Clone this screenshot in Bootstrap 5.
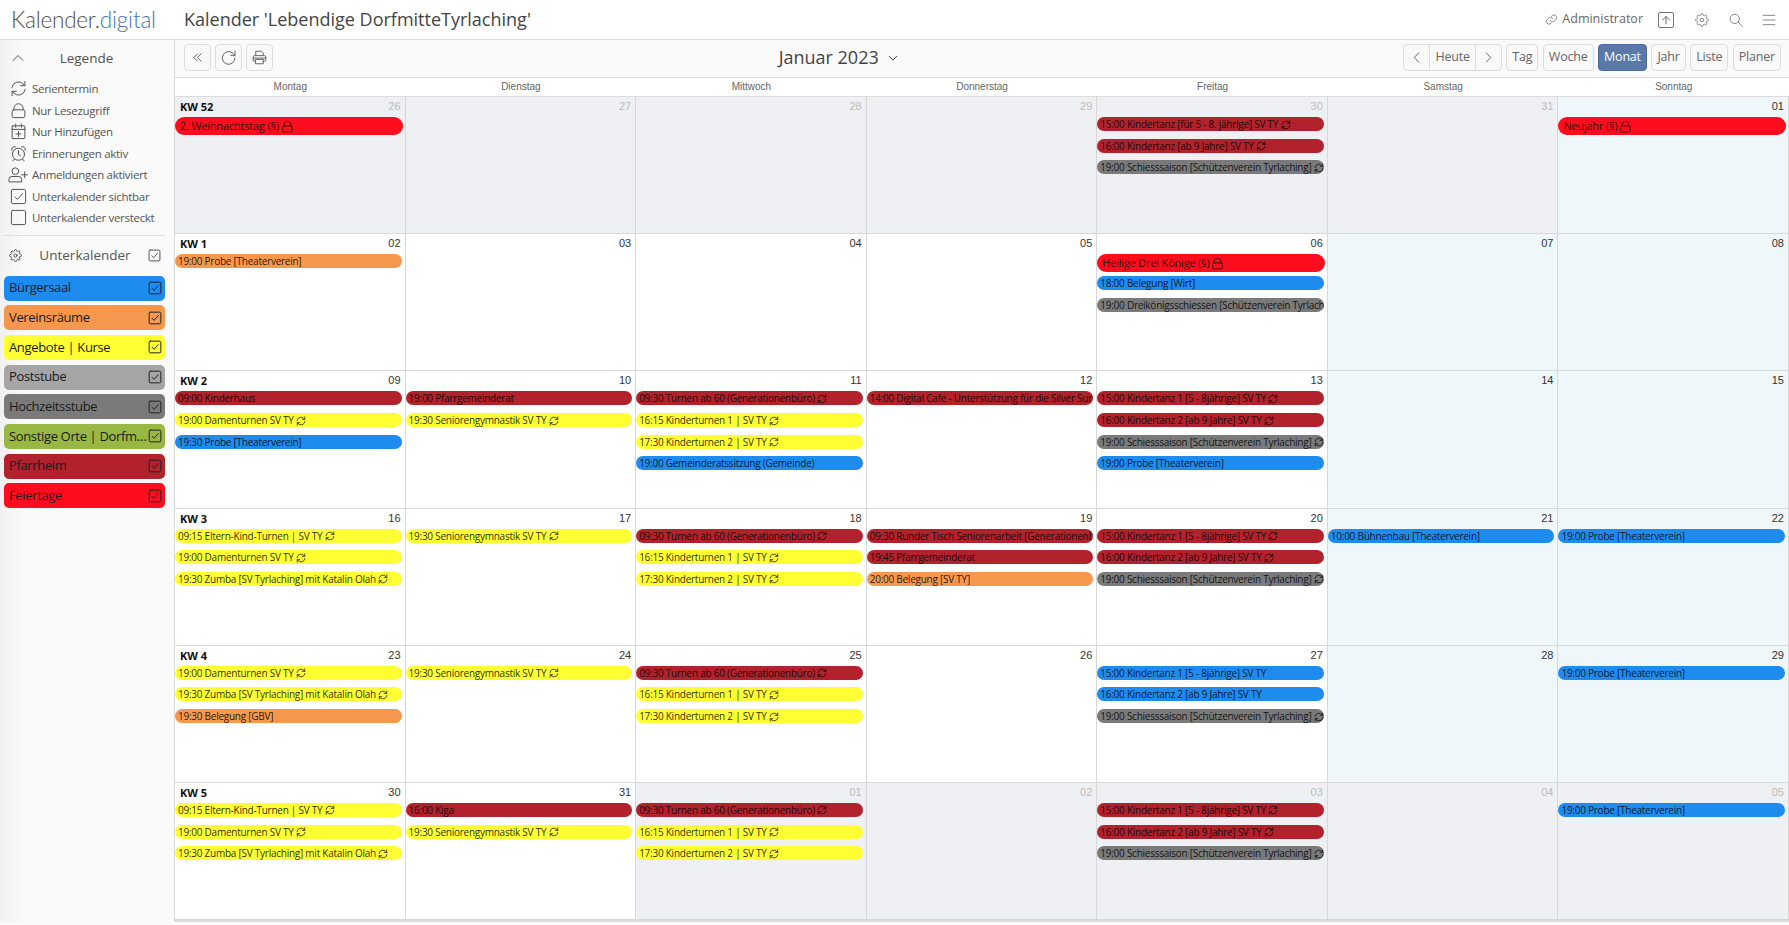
<!DOCTYPE html>
<html lang="de">
<head>
    <meta charset="UTF-8">
    <meta name="viewport" content="width=device-width, initial-scale=1.0">
    <title>Kalender 'Lebendige DorfmitteTyrlaching'</title>
    <link rel="stylesheet" href="https://cdn.jsdelivr.net/npm/bootstrap@5.3.0/dist/css/bootstrap.min.css">
    <script src="https://cdn.jsdelivr.net/npm/bootstrap@5.3.0/dist/js/bootstrap.bundle.min.js"></script>
    <style>
        html, body { height: 100%; }
        body { overflow: hidden; background: #fafafa; font-family: "Open Sans", sans-serif; color: #555; }
        svg.ic { fill: none; stroke: currentColor; stroke-width: 1px; stroke-linecap: round; stroke-linejoin: round; flex: none; }
        symbol * { vector-effect: non-scaling-stroke; }

        .top-bar { height: 40px; background: #fff; border-bottom: 1px solid #ddd; padding-left: 11px; }
        .logo { width: 173px; font-family: Lato, sans-serif; font-weight: 300; font-size: 22.5px; color: #4f4f4f; letter-spacing: -.2px; }
        .logo span { color: #3f73b0; }
        .page-title { font-size: 18px; color: #444; }
        .top-tools { color: #888; font-size: 12.5px; }
        .admin-name { color: #666; margin-right: 15px; }
        .up-box { width: 16px; height: 16px; margin-right: 21px; border: 1px solid #777; border-radius: 2px; color: #666; }
        .top-tools .tool-ic { margin-right: 19.5px; }
        .top-tools .tool-ic:last-child { margin-right: 13px; }

        .side-bar { width: 175px; padding: 6px 9px 0 4px; background: linear-gradient(90deg, #f1f1f1, #fafafa 24px); border-right: 1px solid #d8d8d8; }
        .side-head { height: 24px; font-size: 13.5px; color: #555; }
        .legend-list { margin: 8px 0 6px; padding-left: 6px; font-size: 11.5px; letter-spacing: -.3px; color: #555; }
        .legend-list li { height: 21.5px; gap: 6px; white-space: nowrap; }
        .legend-list svg { width: 17px; height: 17px; margin-left: -.5px; margin-right: -.5px; }
        .legend-list svg.wide-ic { width: 20px; margin-left: -2px; margin-right: -2px; }
        .side-rule { height: 1px; margin: 0; background: #ddd; opacity: 1; border: 0; }
        .sub-head { height: 40px; font-size: 13.5px; color: #555; padding: 0 4px 0 5px; }
        .sub-item { height: 25px; margin-bottom: 4.7px; padding: 0 3px 0 5px; border-radius: 5px; font-size: 13px; letter-spacing: -.35px; color: #1a1a1a; }
        .sub-item svg { width: 14px; height: 14px; color: #222; }

        .cal-main { min-width: 0; }
        .tool-row { height: 37px; padding: 4px 8px 0 9px; }
        .tb-btn { height: 27px; padding: 0 5px; display: inline-flex; align-items: center; justify-content: center; background: #f9f9f9; border: 1px solid #ddd; border-radius: 4px; font-size: 12.5px; letter-spacing: -.2px; color: #666; }
        .tb-btn.square { width: 27px; padding: 0; }
        .tb-btn.on { background: #5a78a8; border-color: #4d6c9e; color: #fff; }
        .tb-gap { gap: 4.5px; }
        .month-name { font-size: 18px; color: #444; gap: 9px; }

        .week-head { height: 20px; background: #fff; border-top: 1px solid #ddd; border-bottom: 1px solid #ddd; }
        .week-head > div { flex: 1 1 0; text-align: center; font: 10px/18px "Liberation Sans", sans-serif; color: #666; }
        .cal-grid { grid-template-columns: repeat(7, minmax(0, 1fr)); grid-auto-rows: 137.2px; background: #fff; border-bottom: 2px solid #ddd; }
        .day { overflow: hidden; border-right: 1px solid #d8d8d8; border-bottom: 1px solid #d8d8d8; }
        .day.we { background: #eff7fb; }
        .day.out { background: #eff0f3; }
        .day-top { height: 20px; padding: 3px 4px 0 5px; }
        .kw { font-size: 11px; font-weight: 700; color: #111; line-height: 14px; }
        .num { margin-left: auto; font: 11px/13px "Liberation Sans", sans-serif; color: #333; }
        .out .num { color: #bbb; }
        .ev { height: 14px; margin: 0 3px 7.67px 0; padding-left: 3px; border-radius: 7px; overflow: hidden; white-space: nowrap; font-size: 10px; letter-spacing: -.25px; line-height: 14px; color: rgba(0,0,0,.85); }
        .ev svg { width: 10px; height: 10px; vertical-align: -1.5px; margin-left: 0; stroke-width: .8px; }
        .ev.whole { height: 18px; margin: 0 2px 4px 0; padding-left: 5px; border-radius: 9px; font-size: 11px; letter-spacing: -.2px; line-height: 18px; }
        .ev.whole svg { width: 13px; height: 13px; vertical-align: -2.5px; margin-left: -1px; }

        .c-blue { background: #1e8bef; }
        .c-orange { background: #f5984e; }
        .c-yellow { background: #ffff33; }
        .c-grey { background: #a5a5a5; }
        .c-dark { background: #7a7a7a; }
        .c-green { background: #99b843; }
        .c-wine { background: #b2222c; }
        .c-red { background: #ff0d1e; }
    </style>
</head>
<body>
    <svg width="0" height="0" class="position-absolute">
        <symbol id="i-repeat" viewBox="0 0 24 24"><path d="M2.500 11a9.500 9.500 0 0 1 17-4.500L21 8M21 2v6h-6M21.500 13a9.500 9.500 0 0 1-17 4.500L3 16M3 22v-6h6"/></symbol>
        <symbol id="i-lock" viewBox="0 0 24 24"><rect x="3" y="11" width="18" height="11" rx="2.500"/><path d="M5.500 11V9a6.500 6.500 0 0 1 13 0v2"/></symbol>
        <symbol id="i-calplus" viewBox="0 0 24 24"><rect x="3" y="4" width="18" height="18" rx="1"/><path d="M3 9h18M8 1.500V6M16 1.500V6M12 12v7M8.500 15.500h7"/></symbol>
        <symbol id="i-alarm" viewBox="0 0 24 24"><circle cx="12" cy="13" r="8.500"/><path d="M12 8v5.500l3 2M2.500 7.500a4 4 0 0 1 5-5M21.500 7.500a4 4 0 0 0-5-5M6 20l-2 2.500M18 20l2 2.500"/></symbol>
        <symbol id="i-userplus" viewBox="0 0 30 24"><circle cx="11" cy="7" r="5"/><path d="M1.500 22.500v-3a4.500 4.500 0 0 1 4.500-4.500h10a4.500 4.500 0 0 1 4.500 4.500v3zM25 8v9M20.500 12.500h9"/></symbol>
        <symbol id="i-check" viewBox="0 0 24 24"><rect x="2" y="2" width="20" height="20" rx="2"/><path d="M7 12.500l3.500 3.500L17.500 8"/></symbol>
        <symbol id="i-empty" viewBox="0 0 24 24"><rect x="2" y="2" width="20" height="20" rx="2"/></symbol>
        <symbol id="i-gear" viewBox="0 0 24 24"><circle cx="12" cy="12" r="3"/><path d="M19.400 15a1.650 1.650 0 0 0 .33 1.820l.06.06a2 2 0 0 1 0 2.830 2 2 0 0 1-2.830 0l-.06-.06a1.650 1.650 0 0 0-1.820-.33 1.650 1.650 0 0 0-1 1.510V21a2 2 0 0 1-2 2 2 2 0 0 1-2-2v-.09A1.650 1.650 0 0 0 9 19.400a1.650 1.650 0 0 0-1.820.33l-.06.06a2 2 0 0 1-2.830 0 2 2 0 0 1 0-2.830l.06-.06a1.650 1.650 0 0 0 .33-1.820 1.650 1.650 0 0 0-1.510-1H3a2 2 0 0 1-2-2 2 2 0 0 1 2-2h.09A1.650 1.650 0 0 0 4.600 9a1.650 1.650 0 0 0-.33-1.820l-.06-.06a2 2 0 0 1 0-2.830 2 2 0 0 1 2.830 0l.06.06a1.650 1.650 0 0 0 1.820.33H9a1.650 1.650 0 0 0 1-1.510V3a2 2 0 0 1 2-2 2 2 0 0 1 2 2v.09a1.650 1.650 0 0 0 1 1.510 1.650 1.650 0 0 0 1.820-.33l.06-.06a2 2 0 0 1 2.830 0 2 2 0 0 1 0 2.830l-.06.06a1.650 1.650 0 0 0-.33 1.820V9a1.650 1.650 0 0 0 1.510 1H21a2 2 0 0 1 2 2 2 2 0 0 1-2 2h-.09a1.650 1.650 0 0 0-1.510 1z"/></symbol>
        <symbol id="i-link" viewBox="0 0 24 24"><path d="M10 14a5 5 0 0 0 7.500.5l3-3a5 5 0 0 0-7-7l-1.700 1.700"/><path d="M14 10a5 5 0 0 0-7.500-.5l-3 3a5 5 0 0 0 7 7l1.700-1.700"/></symbol>
        <symbol id="i-search" viewBox="0 0 24 24"><circle cx="10" cy="10" r="8"/><path d="M16 16l7 7"/></symbol>
        <symbol id="i-menu" viewBox="0 0 24 24"><path d="M2 4h20M2 12h20M2 20h20"/></symbol>
        <symbol id="i-up" viewBox="0 0 24 24"><path d="M12 20V5M5 12l7-7 7 7"/></symbol>
        <symbol id="i-chev-up" viewBox="0 0 24 24"><path d="M2 17L12 7l10 10"/></symbol>
        <symbol id="i-chev-down" viewBox="0 0 24 24"><path d="M3 8l9 9 9-9"/></symbol>
        <symbol id="i-chev-left" viewBox="0 0 24 24"><path d="M17 2L7 12l10 10"/></symbol>
        <symbol id="i-chev-right" viewBox="0 0 24 24"><path d="M7 2l10 10L7 22"/></symbol>
        <symbol id="i-dbl-left" viewBox="0 0 24 24"><path d="M12 4l-8 8 8 8M20 4l-8 8 8 8"/></symbol>
        <symbol id="i-redo" viewBox="0 0 24 24"><path d="M21 12a9.500 9.500 0 1 1-3-7l3 3M21 1.500V8h-6.500"/></symbol>
        <symbol id="i-print" viewBox="0 0 24 24"><path d="M6 9V2h9l3 3v4M6 18H4a2 2 0 0 1-2-2v-5a2 2 0 0 1 2-2h16a2 2 0 0 1 2 2v5a2 2 0 0 1-2 2h-2M2 13h20M6 15h12v7H6z"/></symbol>
    </svg>

    <header class="top-bar d-flex align-items-center">
        <div class="logo">Kalender.<span>digital</span></div>
        <div class="page-title">Kalender 'Lebendige DorfmitteTyrlaching'</div>
        <div class="top-tools ms-auto d-flex align-items-center">
            <svg class="ic me-1" width="13" height="13"><use href="#i-link"/></svg>
            <span class="admin-name">Administrator</span>
            <span class="up-box d-flex align-items-center justify-content-center"><svg class="ic" width="12" height="12"><use href="#i-up"/></svg></span>
            <svg class="ic tool-ic" width="14" height="14"><use href="#i-gear"/></svg>
            <svg class="ic tool-ic" width="14" height="14"><use href="#i-search"/></svg>
            <svg class="ic tool-ic" width="14" height="14"><use href="#i-menu"/></svg>
        </div>
    </header>

    <div class="d-flex">
        <aside class="side-bar flex-shrink-0">
            <div class="side-head d-flex align-items-center">
                <svg class="ic ms-2" width="12" height="12"><use href="#i-chev-up"/></svg>
                <span class="flex-grow-1 text-center">Legende</span>
                <span class="px-2"></span>
            </div>
            <ul class="legend-list list-unstyled">
                <li class="d-flex align-items-center"><svg class="ic"><use href="#i-repeat"/></svg>Serientermin</li>
                <li class="d-flex align-items-center"><svg class="ic"><use href="#i-lock"/></svg>Nur Lesezugriff</li>
                <li class="d-flex align-items-center"><svg class="ic"><use href="#i-calplus"/></svg>Nur Hinzufügen</li>
                <li class="d-flex align-items-center"><svg class="ic"><use href="#i-alarm"/></svg>Erinnerungen aktiv</li>
                <li class="d-flex align-items-center"><svg class="ic wide-ic"><use href="#i-userplus"/></svg>Anmeldungen aktiviert</li>
                <li class="d-flex align-items-center"><svg class="ic"><use href="#i-check"/></svg>Unterkalender sichtbar</li>
                <li class="d-flex align-items-center"><svg class="ic"><use href="#i-empty"/></svg>Unterkalender versteckt</li>
            </ul>
            <hr class="side-rule">
            <div class="sub-head d-flex align-items-center">
                <svg class="ic" width="13" height="13"><use href="#i-gear"/></svg>
                <span class="flex-grow-1 text-center">Unterkalender</span>
                <svg class="ic" width="13" height="13"><use href="#i-check"/></svg>
            </div>
            <div class="sub-item c-blue d-flex align-items-center justify-content-between"><span class="text-truncate">Bürgersaal</span><svg class="ic"><use href="#i-check"/></svg></div>
            <div class="sub-item c-orange d-flex align-items-center justify-content-between"><span class="text-truncate">Vereinsräume</span><svg class="ic"><use href="#i-check"/></svg></div>
            <div class="sub-item c-yellow d-flex align-items-center justify-content-between"><span class="text-truncate">Angebote | Kurse</span><svg class="ic"><use href="#i-check"/></svg></div>
            <div class="sub-item c-grey d-flex align-items-center justify-content-between"><span class="text-truncate">Poststube</span><svg class="ic"><use href="#i-check"/></svg></div>
            <div class="sub-item c-dark d-flex align-items-center justify-content-between"><span class="text-truncate">Hochzeitsstube</span><svg class="ic"><use href="#i-check"/></svg></div>
            <div class="sub-item c-green d-flex align-items-center justify-content-between"><span class="text-truncate">Sonstige Orte | Dorfmitte</span><svg class="ic"><use href="#i-check"/></svg></div>
            <div class="sub-item c-wine d-flex align-items-center justify-content-between"><span class="text-truncate">Pfarrheim</span><svg class="ic"><use href="#i-check"/></svg></div>
            <div class="sub-item c-red d-flex align-items-center justify-content-between"><span class="text-truncate">Feiertage</span><svg class="ic"><use href="#i-check"/></svg></div>
        </aside>

        <main class="cal-main flex-grow-1">
            <div class="tool-row d-flex justify-content-between align-items-start">
                <div class="d-flex gap-1">
                    <button class="btn tb-btn square"><svg class="ic" width="11" height="11"><use href="#i-dbl-left"/></svg></button>
                    <button class="btn tb-btn square"><svg class="ic" width="16" height="16"><use href="#i-redo"/></svg></button>
                    <button class="btn tb-btn square"><svg class="ic" width="15" height="15"><use href="#i-print"/></svg></button>
                </div>
                <div class="month-name d-flex align-items-center">Januar 2023 <svg class="ic" width="10" height="10"><use href="#i-chev-down"/></svg></div>
                <div class="d-flex tb-gap">
                    <div class="btn-group">
                        <button class="btn tb-btn square"><svg class="ic" width="11" height="11"><use href="#i-chev-left"/></svg></button>
                        <button class="btn tb-btn">Heute</button>
                        <button class="btn tb-btn square"><svg class="ic" width="11" height="11"><use href="#i-chev-right"/></svg></button>
                    </div>
                    <button class="btn tb-btn">Tag</button>
                    <button class="btn tb-btn">Woche</button>
                    <button class="btn tb-btn on">Monat</button>
                    <button class="btn tb-btn">Jahr</button>
                    <button class="btn tb-btn">Liste</button>
                    <button class="btn tb-btn">Planer</button>
                </div>
            </div>

            <div class="week-head d-flex">
                <div>Montag</div><div>Dienstag</div><div>Mittwoch</div><div>Donnerstag</div><div>Freitag</div><div>Samstag</div><div>Sonntag</div>
            </div>

            <div class="cal-grid d-grid" id="calendar"></div>
        </main>
    </div>

    <script>
        // colour, text, flag: 1 = repeating icon, 2 = whole-day with lock
        const K1 = ['c-wine', '15:00 Kindertanz 1 [5 - 8jährige] SV TY', 1];
        const K2 = ['c-wine', '16:00 Kindertanz 2 [ab 9 Jahre] SV TY', 1];
        const SCH = ['c-dark', '19:00 Schiesssaison [Schützenverein Tyrlaching]', 1];
        const TUR = ['c-wine', '09:30 Turnen ab 60 (Generationenbüro)', 1];
        const KT1 = ['c-yellow', '16:15 Kinderturnen 1 | SV TY', 1];
        const KT2 = ['c-yellow', '17:30 Kinderturnen 2 | SV TY', 1];
        const DAM = ['c-yellow', '19:00 Damenturnen SV TY', 1];
        const ZUM = ['c-yellow', '19:30 Zumba [SV Tyrlaching] mit Katalin Olah', 1];
        const SEN = ['c-yellow', '19:30 Seniorengymnastik SV TY', 1];
        const ELT = ['c-yellow', '09:15 Eltern-Kind-Turnen | SV TY', 1];
        const PRB = ['c-blue', '19:00 Probe [Theaterverein]'];

        const days = [
            ['26', 'out', 'KW 52', [['c-red', '2. Weihnachtstag (§)', 2]]],
            ['27', 'out'], ['28', 'out'], ['29', 'out'],
            ['30', 'out', '', [['c-wine', '15:00 Kindertanz [für 5 - 8. jährige] SV TY', 1], ['c-wine', '16:00 Kindertanz [ab 9 Jahre] SV TY', 1], SCH]],
            ['31', 'out'],
            ['01', 'we', '', [['c-red', 'Neujahr (§)', 2]]],

            ['02', '', 'KW 1', [['c-orange', '19:00 Probe [Theaterverein]']]],
            ['03', ''], ['04', ''], ['05', ''],
            ['06', '', '', [['c-red', 'Heilige Drei Könige (§)', 2], ['c-blue', '18:00 Belegung [Wirt]'], ['c-dark', '19:00 Dreikönigsschiessen [Schützenverein Tyrlaching]']]],
            ['07', 'we'], ['08', 'we'],

            ['09', '', 'KW 2', [['c-wine', '09:00 Kinderhaus'], DAM, ['c-blue', '19:30 Probe [Theaterverein]']]],
            ['10', '', '', [['c-wine', '19:00 Pfarrgemeinderat'], SEN]],
            ['11', '', '', [TUR, KT1, KT2, ['c-blue', '19:00 Gemeinderatssitzung (Gemeinde)']]],
            ['12', '', '', [['c-wine', '14:00 Digital Cafe - Unterstützung für die Silver Surfer']]],
            ['13', '', '', [K1, K2, SCH, PRB]],
            ['14', 'we'], ['15', 'we'],

            ['16', '', 'KW 3', [ELT, DAM, ZUM]],
            ['17', '', '', [SEN]],
            ['18', '', '', [TUR, KT1, KT2]],
            ['19', '', '', [['c-wine', '09:30 Runder Tisch Seniorenarbeit [Generationenbüro]'], ['c-wine', '19:45 Pfarrgemeinderat'], ['c-orange', '20:00 Belegung [SV TY]']]],
            ['20', '', '', [K1, K2, SCH]],
            ['21', 'we', '', [['c-blue', '10:00 Bühnenbau [Theaterverein]']]],
            ['22', 'we', '', [PRB]],

            ['23', '', 'KW 4', [DAM, ZUM, ['c-orange', '19:30 Belegung [GBV]']]],
            ['24', '', '', [SEN]],
            ['25', '', '', [TUR, KT1, KT2]],
            ['26', ''],
            ['27', '', '', [['c-blue', '15:00 Kindertanz 1 [5 - 8jährige] SV TY'], ['c-blue', '16:00 Kindertanz 2 [ab 9 Jahre] SV TY'], SCH]],
            ['28', 'we'],
            ['29', 'we', '', [PRB]],

            ['30', '', 'KW 5', [ELT, DAM, ZUM]],
            ['31', '', '', [['c-wine', '16:00 Kiga'], SEN]],
            ['01', 'out', '', [TUR, KT1, KT2]],
            ['02', 'out'],
            ['03', 'out', '', [K1, K2, SCH]],
            ['04', 'out'],
            ['05', 'out', '', [PRB]]
        ];

        const icon = name => ` <svg class="ic"><use href="#${name}"/></svg>`;

        document.getElementById('calendar').innerHTML = days.map(([num, kind, kw, events]) => {
            const items = (events || []).map(([colour, text, flag]) => {
                if (flag === 2) return `<div class="ev whole ${colour}">${text}${icon('i-lock')}</div>`;
                return `<div class="ev ${colour}">${text}${flag ? icon('i-repeat') : ''}</div>`;
            }).join('');
            return `<div class="day ${kind}">
                <div class="day-top d-flex">${kw ? `<span class="kw">${kw}</span>` : ''}<span class="num">${num}</span></div>
                ${items}
            </div>`;
        }).join('');
    </script>
</body>
</html>
